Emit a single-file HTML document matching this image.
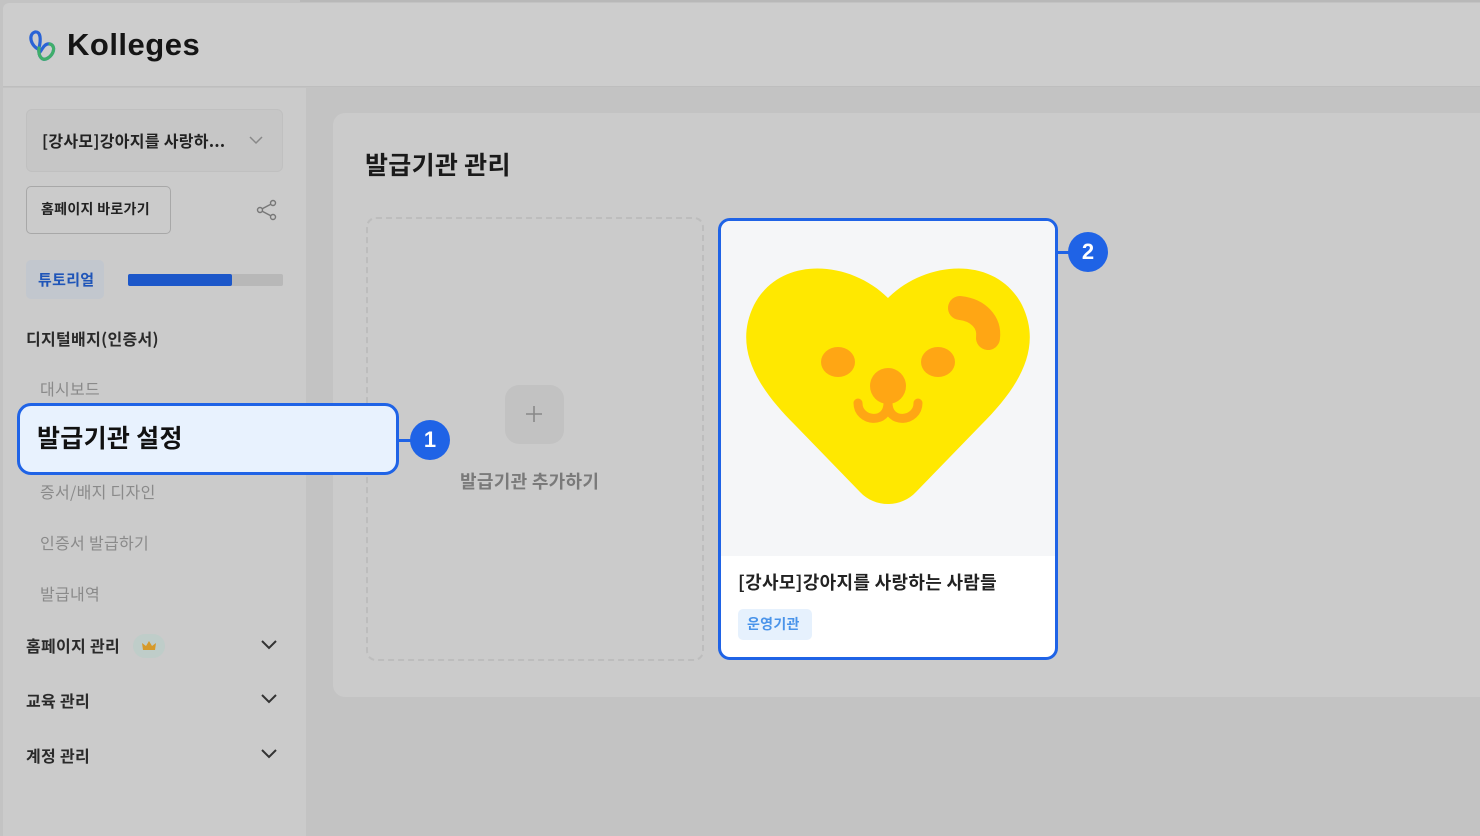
<!DOCTYPE html>
<html><head><meta charset="utf-8">
<style>
*{margin:0;padding:0;box-sizing:border-box}
body{width:1480px;height:836px;overflow:hidden;background:#c3c3c3;font-family:"Liberation Sans","Noto Sans CJK KR",sans-serif;position:relative}
.abs{position:absolute}
.k{font-family:"Noto Sans CJK KR",sans-serif;letter-spacing:0.3px}
</style></head><body>
<div class="abs" style="left:300px;top:0;width:1180px;height:2px;background:#b8b8b8"></div>
<div class="abs" style="left:3px;top:3px;width:1477px;height:84px;background:#cdcdcd;border-bottom:1px solid #bebebe;border-top-left-radius:6px"></div>
<svg class="abs" style="left:26px;top:28px" width="36" height="38" viewBox="0 0 36 38">
<path d="M14 22 C4 18 2 6 9 4 C15 3 15 12 13 20 C12 28 16 34 22 30 C28 26 30 18 24 16 C18 15 16 22 14 24" fill="none" stroke="#2a63d6" stroke-width="3.2" stroke-linecap="round"/>
<path d="M13 20 C12 28 16 34 22 30 C28 26 30 18 24 16" fill="none" stroke="#3fae6a" stroke-width="3.2" stroke-linecap="round"/>
</svg>
<div class="abs" style="left:67px;top:27px;font-size:31px;font-weight:bold;color:#151515;letter-spacing:0.5px">Kolleges</div>

<div class="abs" style="left:3px;top:88px;width:303px;height:748px;background:#cbcbcb"></div>
<div class="abs" style="left:26px;top:109px;width:257px;height:63px;background:#c6c6c6;border:1px solid #c0c0c0;border-radius:6px"></div>
<div class="abs k" style="left:42px;top:128px;font-size:16px;font-weight:bold;color:#222">[강사모]강아지를 사랑하...</div>
<svg class="abs" style="left:248px;top:134px" width="16" height="12"><path d="M2 3 L8 9 L14 3" fill="none" stroke="#888" stroke-width="1.5"/></svg>
<div class="abs" style="left:26px;top:186px;width:145px;height:48px;border:1px solid #a8a8a8;border-radius:5px"></div>
<div class="abs k" style="left:41px;top:199px;font-size:14px;font-weight:bold;color:#222">홈페이지 바로가기</div>
<svg class="abs" style="left:255px;top:198px" width="24" height="24" viewBox="0 0 24 24" fill="none" stroke="#777" stroke-width="1.4"><circle cx="18" cy="5" r="2.5"/><circle cx="5" cy="12" r="2.5"/><circle cx="18" cy="19" r="2.5"/><path d="M7.2 10.8 L15.8 6.2 M7.2 13.2 L15.8 17.8"/></svg>
<div class="abs" style="left:26px;top:260px;width:78px;height:39px;background:#c2c7ce;border-radius:5px"></div>
<div class="abs k" style="left:38px;top:269px;font-size:15px;font-weight:bold;color:#1f55b8">튜토리얼</div>
<div class="abs" style="left:128px;top:274px;width:155px;height:12px;background:#b8b8b8;border-radius:2px"></div>
<div class="abs" style="left:128px;top:274px;width:104px;height:12px;background:#1c57c9;border-radius:2px"></div>
<div class="abs k" style="left:26px;top:326px;font-size:16px;font-weight:bold;color:#2a2a2a">디지털배지(인증서)</div>
<div class="abs k" style="left:40px;top:376px;font-size:16px;color:#8a8a8a">대시보드</div>
<div class="abs k" style="left:40px;top:479px;font-size:16px;color:#8a8a8a">증서/배지 디자인</div>
<div class="abs k" style="left:40px;top:530px;font-size:16px;color:#8a8a8a">인증서 발급하기</div>
<div class="abs k" style="left:40px;top:581px;font-size:16px;color:#8a8a8a">발급내역</div>
<div class="abs k" style="left:26px;top:633px;font-size:16px;font-weight:bold;color:#2a2a2a">홈페이지 관리</div>
<div class="abs" style="left:133px;top:634px;width:32px;height:24px;border-radius:12px;background:#bfcdc9"></div>
<svg class="abs" style="left:141px;top:640px" width="16" height="12"><path d="M2 10 L1 3 L5 6 L8 1 L11 6 L15 3 L14 10Z" fill="#d69a2a"/></svg>
<div class="abs k" style="left:26px;top:688px;font-size:16px;font-weight:bold;color:#2a2a2a">교육 관리</div>
<div class="abs k" style="left:26px;top:743px;font-size:16px;font-weight:bold;color:#2a2a2a">계정 관리</div>
<svg class="abs" style="left:259px;top:638px" width="20" height="14"><path d="M3 3 L10 10 L17 3" fill="none" stroke="#333" stroke-width="2"/></svg>
<svg class="abs" style="left:259px;top:692px" width="20" height="14"><path d="M3 3 L10 10 L17 3" fill="none" stroke="#333" stroke-width="2"/></svg>
<svg class="abs" style="left:259px;top:747px" width="20" height="14"><path d="M3 3 L10 10 L17 3" fill="none" stroke="#333" stroke-width="2"/></svg>

<div class="abs" style="left:333px;top:113px;width:1160px;height:584px;background:#cbcbcb;border-radius:12px"></div>
<div class="abs k" style="left:365px;top:146px;font-size:25px;font-weight:bold;color:#1a1a1a">발급기관 관리</div>
<div class="abs" style="left:366px;top:217px;width:338px;height:444px;border:2px dashed #bdbdbd;border-radius:10px"></div>
<div class="abs" style="left:505px;top:385px;width:59px;height:59px;background:#c2c2c2;border-radius:14px"></div>
<svg class="abs" style="left:524px;top:404px" width="20" height="20"><path d="M10 2V18M2 10H18" stroke="#888" stroke-width="1.6"/></svg>
<div class="abs k" style="left:460px;top:468px;font-size:18px;font-weight:bold;color:#7a7a7a">발급기관 추가하기</div>

<div class="abs" style="left:17px;top:403px;width:382px;height:72px;background:#e8f2fe;border:3px solid #1f63e6;border-radius:14px"></div>
<div class="abs k" style="left:37px;top:419px;font-size:25px;font-weight:bold;color:#111">발급기관 설정</div>
<div class="abs" style="left:398px;top:439px;width:14px;height:3px;background:#1f63e6"></div>
<div class="abs" style="left:410px;top:420px;width:40px;height:40px;border-radius:50%;background:#1f63e6;color:#fff;font-size:22px;font-weight:bold;text-align:center;line-height:40px">1</div>

<div class="abs" style="left:718px;top:218px;width:340px;height:442px;background:#fff;border:3px solid #1f63e6;border-radius:12px;overflow:hidden">
<div style="height:335px;background:#f5f6f8"></div>
</div>
<svg class="abs" style="left:740px;top:260px" width="296" height="250" viewBox="0 0 296 250">
<path d="M148 38 C110 0 40 -5 14 45 C-8 90 20 130 55 165 L120 232 C135 248 161 248 176 232 L241 165 C276 130 304 90 282 45 C256 -5 186 0 148 38Z" fill="#ffe800"/>
<ellipse cx="98" cy="102" rx="17" ry="15" fill="#ffa614"/>
<ellipse cx="198" cy="102" rx="17" ry="15" fill="#ffa614"/>
<circle cx="148" cy="126" r="18" fill="#ffa614"/>
<path d="M118 143 C118 162 148 165 148 143 C148 165 178 162 178 143" fill="none" stroke="#ffa614" stroke-width="9" stroke-linecap="round"/>
<path d="M220 48 C238 50 250 62 248 78" fill="none" stroke="#ffa614" stroke-width="24" stroke-linecap="round"/>
</svg>
<div class="abs k" style="left:738px;top:569px;font-size:18px;font-weight:bold;color:#222">[강사모]강아지를 사랑하는 사람들</div>
<div class="abs" style="left:738px;top:609px;width:74px;height:31px;background:#e6f1fd;border-radius:5px"></div>
<div class="abs k" style="left:747px;top:614px;font-size:14px;font-weight:bold;color:#4a94ea">운영기관</div>
<div class="abs" style="left:1057px;top:251px;width:14px;height:3px;background:#1f63e6"></div>
<div class="abs" style="left:1068px;top:232px;width:40px;height:40px;border-radius:50%;background:#1f63e6;color:#fff;font-size:22px;font-weight:bold;text-align:center;line-height:40px">2</div>
</body></html>
